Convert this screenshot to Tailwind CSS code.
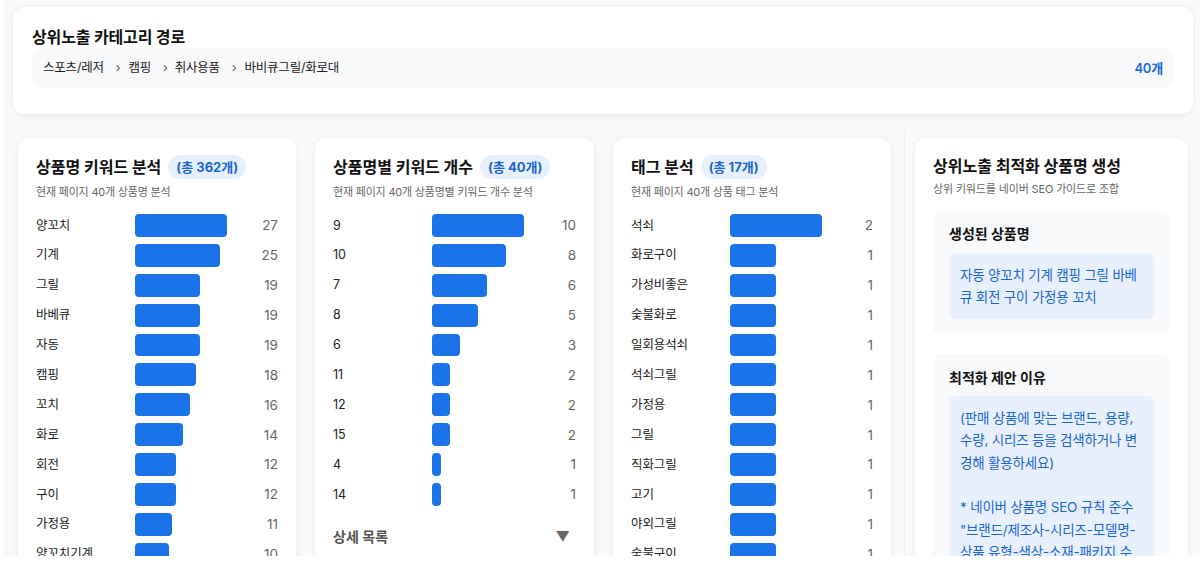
<!DOCTYPE html>
<html lang="ko">
<head>
    <meta charset="UTF-8">
    <title>상위노출 분석</title>
    <script src="https://cdn.jsdelivr.net/npm/@tailwindcss/browser@4"></script>
</head>
<body class="bg-white h-[564px] overflow-hidden font-['Inter','Noto_Sans_CJK_KR',sans-serif] text-[#111]">
<div class="ml-[4px] h-[556px] overflow-hidden bg-[#f8f9fa] pt-[7px]">

    <!-- Category path -->
    <section class="ml-[9px] mr-[7px] h-[107px] rounded-xl bg-white px-[19px] pt-[19px] shadow-[0_1px_6px_rgba(0,0,0,0.08)]">
        <h2 class="text-[16px] leading-[22px] font-bold tracking-[-0.15px]">상위노출 카테고리 경로</h2>
        <div class="flex h-[40px] items-center justify-between rounded-lg bg-[#f8f9fa] px-[11px] pt-[1px] text-[12.5px] tracking-[-0.2px]">
            <div class="flex items-center text-[#222]">
                <span>스포츠/레저</span><span class="ml-[12px] mr-[8px] text-[#555]">›</span>
                <span>캠핑</span><span class="ml-[12px] mr-[7px] text-[#555]">›</span>
                <span>취사용품</span><span class="ml-[12px] mr-[8px] text-[#555]">›</span>
                <span>바비큐그릴/화로대</span>
            </div>
            <span class="text-[13px] font-semibold text-[#1967d2]">40개</span>
        </div>
    </section>

    <div class="mt-[16px] flex pl-[14px]">
        <div class="flex gap-[19px] pt-[8px]">
            <!-- Keyword charts -->
            <section class="h-[500px] w-[278px] overflow-hidden rounded-xl bg-white px-[18px] pt-[17px] shadow-[0_1px_6px_rgba(0,0,0,0.07)]">
                <div class="flex items-center gap-[7px]">
                    <h3 class="text-[16px] leading-[24px] font-bold">상품명 키워드 분석</h3>
                    <span class="rounded-full bg-[#e8f0fe] px-[8px] text-[13px] leading-[24px] font-bold text-[#1967d2]">(총 362개)</span>
                </div>
                <p class="mt-[4px] text-[11px] leading-[18px] tracking-[-0.2px] text-[#666]">현재 페이지 40개 상품명 분석</p>
                <div id="chart-name" class="mt-[13px] flex flex-col gap-[7px]"></div>
            </section>

            <section class="h-[500px] w-[279px] overflow-hidden rounded-xl bg-white px-[18px] pt-[17px] shadow-[0_1px_6px_rgba(0,0,0,0.07)]">
                <div class="flex items-center gap-[7px]">
                    <h3 class="text-[16px] leading-[24px] font-bold">상품명별 키워드 개수</h3>
                    <span class="rounded-full bg-[#e8f0fe] px-[8px] text-[13px] leading-[24px] font-bold text-[#1967d2]">(총 40개)</span>
                </div>
                <p class="mt-[4px] text-[11px] leading-[18px] tracking-[-0.2px] text-[#666]">현재 페이지 40개 상품명별 키워드 개수 분석</p>
                <div id="chart-count" class="mt-[13px] flex flex-col gap-[7px]"></div>
                <div class="mt-[20px] flex items-center justify-between pr-[6px] text-[14px] font-semibold text-[#555]">
                    <span>상세 목록</span>
                    <span class="text-[14px] text-[#666]">▼</span>
                </div>
            </section>

            <section class="h-[500px] w-[278px] overflow-hidden rounded-xl bg-white px-[18px] pt-[17px] shadow-[0_1px_6px_rgba(0,0,0,0.07)]">
                <div class="flex items-center gap-[7px]">
                    <h3 class="text-[16px] leading-[24px] font-bold">태그 분석</h3>
                    <span class="rounded-full bg-[#e8f0fe] px-[8px] text-[13px] leading-[24px] font-bold text-[#1967d2]">(총 17개)</span>
                </div>
                <p class="mt-[4px] text-[11px] leading-[18px] tracking-[-0.2px] text-[#666]">현재 페이지 40개 상품 태그 분석</p>
                <div id="chart-tag" class="mt-[13px] flex flex-col gap-[7px]"></div>
            </section>
        </div>

        <!-- Generated title -->
        <div class="ml-[13px] h-[500px] border-l border-[#eceef0] pl-[10px] pt-[8px]">
            <section class="h-[500px] w-[273px] overflow-hidden rounded-xl bg-white px-[18px] pt-[17px] shadow-[0_1px_6px_rgba(0,0,0,0.07)]">
                <h3 class="text-[16px] leading-[22px] font-bold">상위노출 최적화 상품명 생성</h3>
                <p class="mt-[3px] text-[11px] leading-[18px] tracking-[-0.15px] text-[#666]">상위 키워드를 네이버 SEO 가이드로 조합</p>
                <div class="mt-[13px] rounded-lg bg-[#f8f9fa] px-[16px] pt-[13px] pb-[16px]">
                    <h4 class="text-[14px] leading-[20px] font-bold">생성된 상품명</h4>
                    <div class="mt-[9px] rounded-md bg-[#e8f0fe] px-[11px] pt-[11px] pb-[10px] text-[13.5px] leading-[22.4px] tracking-[-0.2px] text-[#1967d2]">자동 양꼬치 기계 캠핑 그릴 바베큐 회전 구이 가정용 꼬치</div>
                </div>
                <div class="mt-[19px] rounded-lg bg-[#f8f9fa] px-[16px] pt-[14px] pb-[16px]">
                    <h4 class="text-[14px] leading-[20px] font-bold">최적화 제안 이유</h4>
                    <div class="mt-[8px] rounded-md bg-[#e8f0fe] px-[11px] py-[11px] text-[13.5px] leading-[22.4px] tracking-[-0.2px] whitespace-pre-line text-[#1967d2]">(판매 상품에 맞는 브랜드, 용량, 수량, 시리즈 등을 검색하거나 변경해 활용하세요)

* 네이버 상품명 SEO 규칙 준수 "브랜드/제조사-시리즈-모델명-상품 유형-색상-소재-패키지 수량"</div>
                </div>
            </section>
        </div>
    </div>
</div>

<script>
    const charts = {
        'chart-name': [['양꼬치',27],['기계',25],['그릴',19],['바베큐',19],['자동',19],['캠핑',18],['꼬치',16],['화로',14],['회전',12],['구이',12],['가정용',11],['양꼬치기계',10]],
        'chart-count': [['9',10],['10',8],['7',6],['8',5],['6',3],['11',2],['12',2],['15',2],['4',1],['14',1]],
        'chart-tag': [['석쇠',2],['화로구이',1],['가성비좋은',1],['숯불화로',1],['일회용석쇠',1],['석쇠그릴',1],['가정용',1],['그릴',1],['직화그릴',1],['고기',1],['야외그릴',1],['숯불구이',1]]
    };

    Object.entries(charts).forEach(([id, rows]) => {
        const max = rows[0][1];
        document.getElementById(id).innerHTML = rows.map(([label, value]) => `
            <div class="flex h-[22.9px] items-center">
                <span class="w-[99px] shrink-0 pt-[1px] text-[12.5px] tracking-[-0.1px] text-[#222]">${label}</span>
                <div class="h-full w-[92px] shrink-0">
                    <div class="h-full rounded-[4px] bg-[#1a73e8]" style="width:${value / max * 100}%"></div>
                </div>
                <span class="flex-1 text-right text-[13.5px] text-[#666]">${value}</span>
            </div>`).join('');
    });
</script>
</body>
</html>
